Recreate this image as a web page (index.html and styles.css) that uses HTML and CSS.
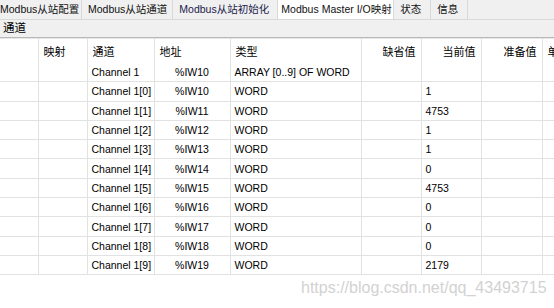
FILE: index.html
```html
<!DOCTYPE html>
<html lang="zh-CN">
<head>
    <meta charset="UTF-8">
    <title>Modbus Master I/O映射</title>
    <link rel="stylesheet" href="styles.css">
</head>
<body>
    <div class="tabs">
        <div class="tab tab-first">Modbus从站配置</div>
        <div class="tab">Modbus从站通道</div>
        <div class="tab tab-hover">Modbus从站初始化</div>
        <div class="tab tab-active">Modbus Master I/O映射</div>
        <div class="tab tab-short">状态</div>
        <div class="tab tab-short">信息</div>
    </div>

    <div class="toolbar">通道</div>

    <table class="io-table">
        <colgroup>
            <col style="width: 38px">
            <col style="width: 49px">
            <col style="width: 67px">
            <col style="width: 76px">
            <col style="width: 131px">
            <col style="width: 60px">
            <col style="width: 60px">
            <col style="width: 61px">
            <col style="width: 60px">
        </colgroup>
        <thead>
            <tr>
                <th></th>
                <th>映射</th>
                <th>通道</th>
                <th>地址</th>
                <th>类型</th>
                <th class="num">缺省值</th>
                <th class="num">当前值</th>
                <th class="num">准备值</th>
                <th>单位</th>
            </tr>
        </thead>
        <tbody>
            <tr><td></td><td></td><td>Channel 1</td><td class="addr">%IW10</td><td>ARRAY [0..9] OF WORD</td><td></td><td></td><td></td><td></td></tr>
            <tr><td></td><td></td><td>Channel 1[0]</td><td class="addr">%IW10</td><td>WORD</td><td></td><td>1</td><td></td><td></td></tr>
            <tr><td></td><td></td><td>Channel 1[1]</td><td class="addr">%IW11</td><td>WORD</td><td></td><td>4753</td><td></td><td></td></tr>
            <tr><td></td><td></td><td>Channel 1[2]</td><td class="addr">%IW12</td><td>WORD</td><td></td><td>1</td><td></td><td></td></tr>
            <tr><td></td><td></td><td>Channel 1[3]</td><td class="addr">%IW13</td><td>WORD</td><td></td><td>1</td><td></td><td></td></tr>
            <tr><td></td><td></td><td>Channel 1[4]</td><td class="addr">%IW14</td><td>WORD</td><td></td><td>0</td><td></td><td></td></tr>
            <tr><td></td><td></td><td>Channel 1[5]</td><td class="addr">%IW15</td><td>WORD</td><td></td><td>4753</td><td></td><td></td></tr>
            <tr><td></td><td></td><td>Channel 1[6]</td><td class="addr">%IW16</td><td>WORD</td><td></td><td>0</td><td></td><td></td></tr>
            <tr><td></td><td></td><td>Channel 1[7]</td><td class="addr">%IW17</td><td>WORD</td><td></td><td>0</td><td></td><td></td></tr>
            <tr><td></td><td></td><td>Channel 1[8]</td><td class="addr">%IW18</td><td>WORD</td><td></td><td>0</td><td></td><td></td></tr>
            <tr><td></td><td></td><td>Channel 1[9]</td><td class="addr">%IW19</td><td>WORD</td><td></td><td>2179</td><td></td><td></td></tr>
        </tbody>
    </table>

    <div class="watermark">https://blog.csdn.net/qq_43493715</div>
</body>
</html>
```

FILE: styles.css
```css
body {
    font-family: 'Liberation Sans', 'Noto Sans CJK SC', sans-serif;
    font-size: 10.5px;
    margin: 0;
    width: 554px;
    height: 308px;
    overflow: hidden;
    position: relative;
    background-color: #fff;
    color: #000;
}

.tabs {
    display: flex;
    height: 19px;
    background-color: #f0f0f0;
    border-bottom: 1px solid #d9d9d9;
}

.tab {
    line-height: 19px;
    padding: 0 5px 0 6px;
    border-right: 1px solid #d9d9d9;
    white-space: nowrap;
    color: #111;
}

.tab-first {
    padding-left: 0;
    width: 82px;
    box-sizing: border-box;
}

.tab-hover {
    color: #1b1b4a;
    width: 105px;
    box-sizing: border-box;
}

.tab-active {
    background-color: #fff;
    padding-left: 3px;
    width: 116px;
    box-sizing: border-box;
}

.tab-short {
    width: 37px;
    box-sizing: border-box;
}

.toolbar {
    height: 17px;
    line-height: 17px;
    padding-left: 3px;
    font-size: 11.5px;
    background-color: #f0f0f0;
    border-bottom: 1px solid #b9b9b9;
    box-shadow: 0 1px 0 #e6e6e6;
}

.io-table {
    table-layout: fixed;
    border-collapse: collapse;
    width: 602px;
}

.io-table th {
    height: 25px;
    padding: 0 5px;
    font-size: 11px;
    font-weight: normal;
    text-align: left;
    border-right: 1px solid #e2e2e2;
    white-space: nowrap;
    overflow: hidden;
}

.io-table th.num {
    text-align: right;
}

.io-table td {
    height: 18.3px;
    padding: 0 4px;
    line-height: 12px;
    border-right: 1px solid #e2e2e2;
    border-bottom: 1px solid #e2e2e2;
    white-space: nowrap;
    overflow: hidden;
}

.io-table th:last-child,
.io-table td:last-child {
    border-right: none;
}

.io-table td.addr {
    text-align: center;
}

.watermark {
    position: absolute;
    left: 301px;
    top: 279px;
    font-size: 16px;
    color: #d2d2d2;
    white-space: nowrap;
}
```
